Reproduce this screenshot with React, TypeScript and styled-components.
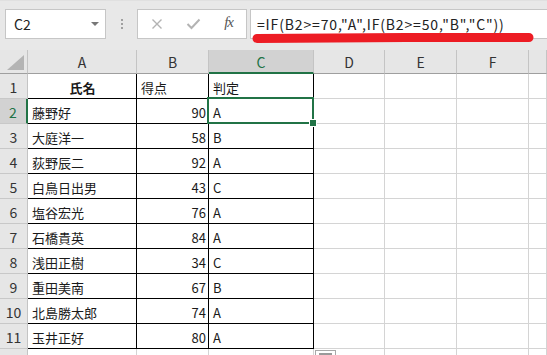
import React from 'react';
import styled, { createGlobalStyle, css } from 'styled-components';

const GREEN = '#217346';

const GlobalStyle = createGlobalStyle`
  * { box-sizing: border-box; }
  body {
    margin: 0;
    background: #ffffff;
    font-family: "Noto Sans CJK JP", "Noto Sans", sans-serif;
  }
`;

const Window = styled.div`
  width: 547px;
  height: 355px;
  overflow: hidden;
  background: #ffffff;
  position: relative;
`;

const FormulaBar = styled.div`
  position: relative;
  height: 50px;
  padding: 9px 0 0 5px;
  display: flex;
  align-items: flex-start;
  background: #e8e8e8;
  border-top: 1px solid #e0e0e0;
`;

const NameBox = styled.div`
  width: 101px;
  height: 30px;
  margin-top: -1px;
  padding: 0 6px 0 8px;
  display: flex;
  align-items: center;
  justify-content: space-between;
  background: #fff;
  border: 1px solid #c6c6c6;
  font-size: 14px;
  color: #222;
`;

const DropArrow = styled.span`
  width: 0;
  height: 0;
  border-left: 4px solid transparent;
  border-right: 4px solid transparent;
  border-top: 4px solid #777;
`;

const Grip = styled.div`
  width: 31px;
  height: 30px;
  margin-top: -1px;
  display: flex;
  flex-direction: column;
  align-items: center;
  justify-content: center;
  gap: 2px;

  span {
    width: 2px;
    height: 2px;
    background: #a0a0a0;
  }
`;

const FuncBox = styled.div`
  width: 110px;
  height: 30px;
  margin-top: -1px;
  padding: 0 13px 0 13px;
  display: flex;
  align-items: center;
  justify-content: space-between;
  background: #fff;
  border: 1px solid #c6c6c6;
`;

const FxLabel = styled.span`
  font-family: "Liberation Serif", serif;
  font-style: italic;
  font-size: 15px;
  color: #555;
  letter-spacing: -1px;
  margin-top: -3px;
`;

const FormulaInput = styled.div`
  flex: 1;
  height: 30px;
  margin: -1px 0 0 3px;
  padding-left: 6px;
  display: flex;
  align-items: center;
  background: #fff;
  border: 1px solid #c6c6c6;
  border-right: none;
  font-size: 14px;
  letter-spacing: 0.85px;
  color: #222;
  white-space: nowrap;
`;

const Marker = styled.svg`
  position: absolute;
  left: 248px;
  top: 30px;
  pointer-events: none;
`;

const Sheet = styled.div`
  display: grid;
  grid-template-columns: 28px 109px 72px 105px 71px 72px 72px 1fr;
  grid-template-rows: 24px repeat(12, 25px);
`;

const HeaderCell = styled.div<{ $active?: boolean }>`
  display: flex;
  align-items: center;
  justify-content: center;
  padding-top: 1px;
  background: ${({ $active }) => ($active ? '#d2d2d2' : '#e6e6e6')};
  color: ${({ $active }) => ($active ? GREEN : '#333')};
  font-size: 14px;
  border-right: 1px solid #c4c4c4;
  border-bottom: ${({ $active }) => ($active ? `2px solid ${GREEN}` : '1px solid #9f9f9f')};
`;

const Corner = styled.div`
  position: relative;
  background: #e6e6e6;
  border-right: 1px solid #c4c4c4;
  border-bottom: 1px solid #9f9f9f;

  svg {
    position: absolute;
    right: 3px;
    bottom: 3px;
  }
`;

const RowHeader = styled.div<{ $active?: boolean }>`
  display: flex;
  align-items: center;
  justify-content: center;
  padding-top: 1px;
  background: ${({ $active }) => ($active ? '#d2d2d2' : '#e6e6e6')};
  color: ${({ $active }) => ($active ? GREEN : '#333')};
  font-size: 14px;
  border-bottom: 1px solid #c8c8c8;
  border-right: ${({ $active }) => ($active ? `2px solid ${GREEN}` : '1px solid #c4c4c4')};
`;

const Cell = styled.div<{ $align?: 'left' | 'right' | 'center'; $bold?: boolean; $table?: boolean; $selected?: boolean }>`
  position: relative;
  display: flex;
  align-items: center;
  padding: 2px 3px 0 4px;
  font-size: 13px;
  color: #1a1a1a;
  white-space: nowrap;
  justify-content: ${({ $align }) =>
    $align === 'right' ? 'flex-end' : $align === 'center' ? 'center' : 'flex-start'};
  font-weight: ${({ $bold }) => ($bold ? 700 : 400)};
  border-right: 1px solid ${({ $table }) => ($table ? '#000' : '#d4d4d4')};
  border-bottom: 1px solid ${({ $table }) => ($table ? '#000' : '#d4d4d4')};

  ${({ $align }) => $align === 'right' && css`padding-right: 2px;`}

  ${({ $selected }) =>
    $selected &&
    css`
      &::after {
        content: '';
        position: absolute;
        top: -2px;
        left: -2px;
        right: -1px;
        bottom: -1px;
        border: 2px solid ${GREEN};
        pointer-events: none;
      }
      &::before {
        content: '';
        position: absolute;
        right: -4px;
        bottom: -4px;
        width: 6px;
        height: 6px;
        background: ${GREEN};
        border: 1px solid #fff;
        z-index: 2;
      }
    `}
`;

const PasteOptions = styled.div`
  position: absolute;
  left: 315px;
  top: 350px;
  width: 21px;
  height: 16px;
  background: #fff;
  border: 1px solid #a8a8a8;

  &::after {
    content: '';
    position: absolute;
    left: 3px;
    top: 2px;
    width: 13px;
    height: 3px;
    background: #9a9a9a;
  }
`;

const columns = ['A', 'B', 'C', 'D', 'E', 'F', ''];

const records: [string, number, string][] = [
  ['藤野好', 90, 'A'],
  ['大庭洋一', 58, 'B'],
  ['荻野辰二', 92, 'A'],
  ['白鳥日出男', 43, 'C'],
  ['塩谷宏光', 76, 'A'],
  ['石橋貴英', 84, 'A'],
  ['浅田正樹', 34, 'C'],
  ['重田美南', 67, 'B'],
  ['北島勝太郎', 74, 'A'],
  ['玉井正好', 80, 'A'],
];

const EmptyCells = () => (
  <>
    {[0, 1, 2, 3].map((i) => (
      <Cell key={i} />
    ))}
  </>
);

const App = () => (
  <Window>
    <GlobalStyle />
    <FormulaBar>
      <NameBox>
        C2
        <DropArrow />
      </NameBox>
      <Grip>
        <span />
        <span />
        <span />
      </Grip>
      <FuncBox>
        <svg width="12" height="12" viewBox="0 0 12 12">
          <path d="M1.5 1.5 L10.5 10.5 M10.5 1.5 L1.5 10.5" stroke="#b3b3b3" strokeWidth="1.4" fill="none" />
        </svg>
        <svg width="15" height="12" viewBox="0 0 15 12">
          <path d="M1.5 6 L5.5 10 L13.5 1.5" stroke="#b3b3b3" strokeWidth="2" fill="none" />
        </svg>
        <FxLabel>fx</FxLabel>
      </FuncBox>
      <FormulaInput>=IF(B2&gt;=70,"A",IF(B2&gt;=50,"B","C"))</FormulaInput>
      <Marker width="292" height="14" viewBox="0 0 292 14">
        <path d="M9 7.5 C80 6.5 200 6 281 6.5" stroke="#ed1c24" strokeWidth="9" strokeLinecap="round" fill="none" />
      </Marker>
    </FormulaBar>

    <Sheet>
      <Corner>
        <svg width="17" height="15" viewBox="0 0 17 15">
          <polygon points="17,0 17,15 0,15" fill="#b4b4b4" />
        </svg>
      </Corner>
      {columns.map((c, i) => (
        <HeaderCell key={i} $active={c === 'C'}>
          {c}
        </HeaderCell>
      ))}

      <RowHeader>1</RowHeader>
      <Cell $table $align="center" $bold>
        氏名
      </Cell>
      <Cell $table>得点</Cell>
      <Cell $table>判定</Cell>
      <EmptyCells />

      {records.map(([name, score, grade], i) => (
        <React.Fragment key={name}>
          <RowHeader $active={i === 0}>{i + 2}</RowHeader>
          <Cell $table>{name}</Cell>
          <Cell $table $align="right">
            {score}
          </Cell>
          <Cell $table $selected={i === 0}>
            {grade}
          </Cell>
          <EmptyCells />
        </React.Fragment>
      ))}

      <RowHeader />
      <Cell />
      <Cell />
      <Cell />
      <EmptyCells />
    </Sheet>
    <PasteOptions />
  </Window>
);

export default App;
